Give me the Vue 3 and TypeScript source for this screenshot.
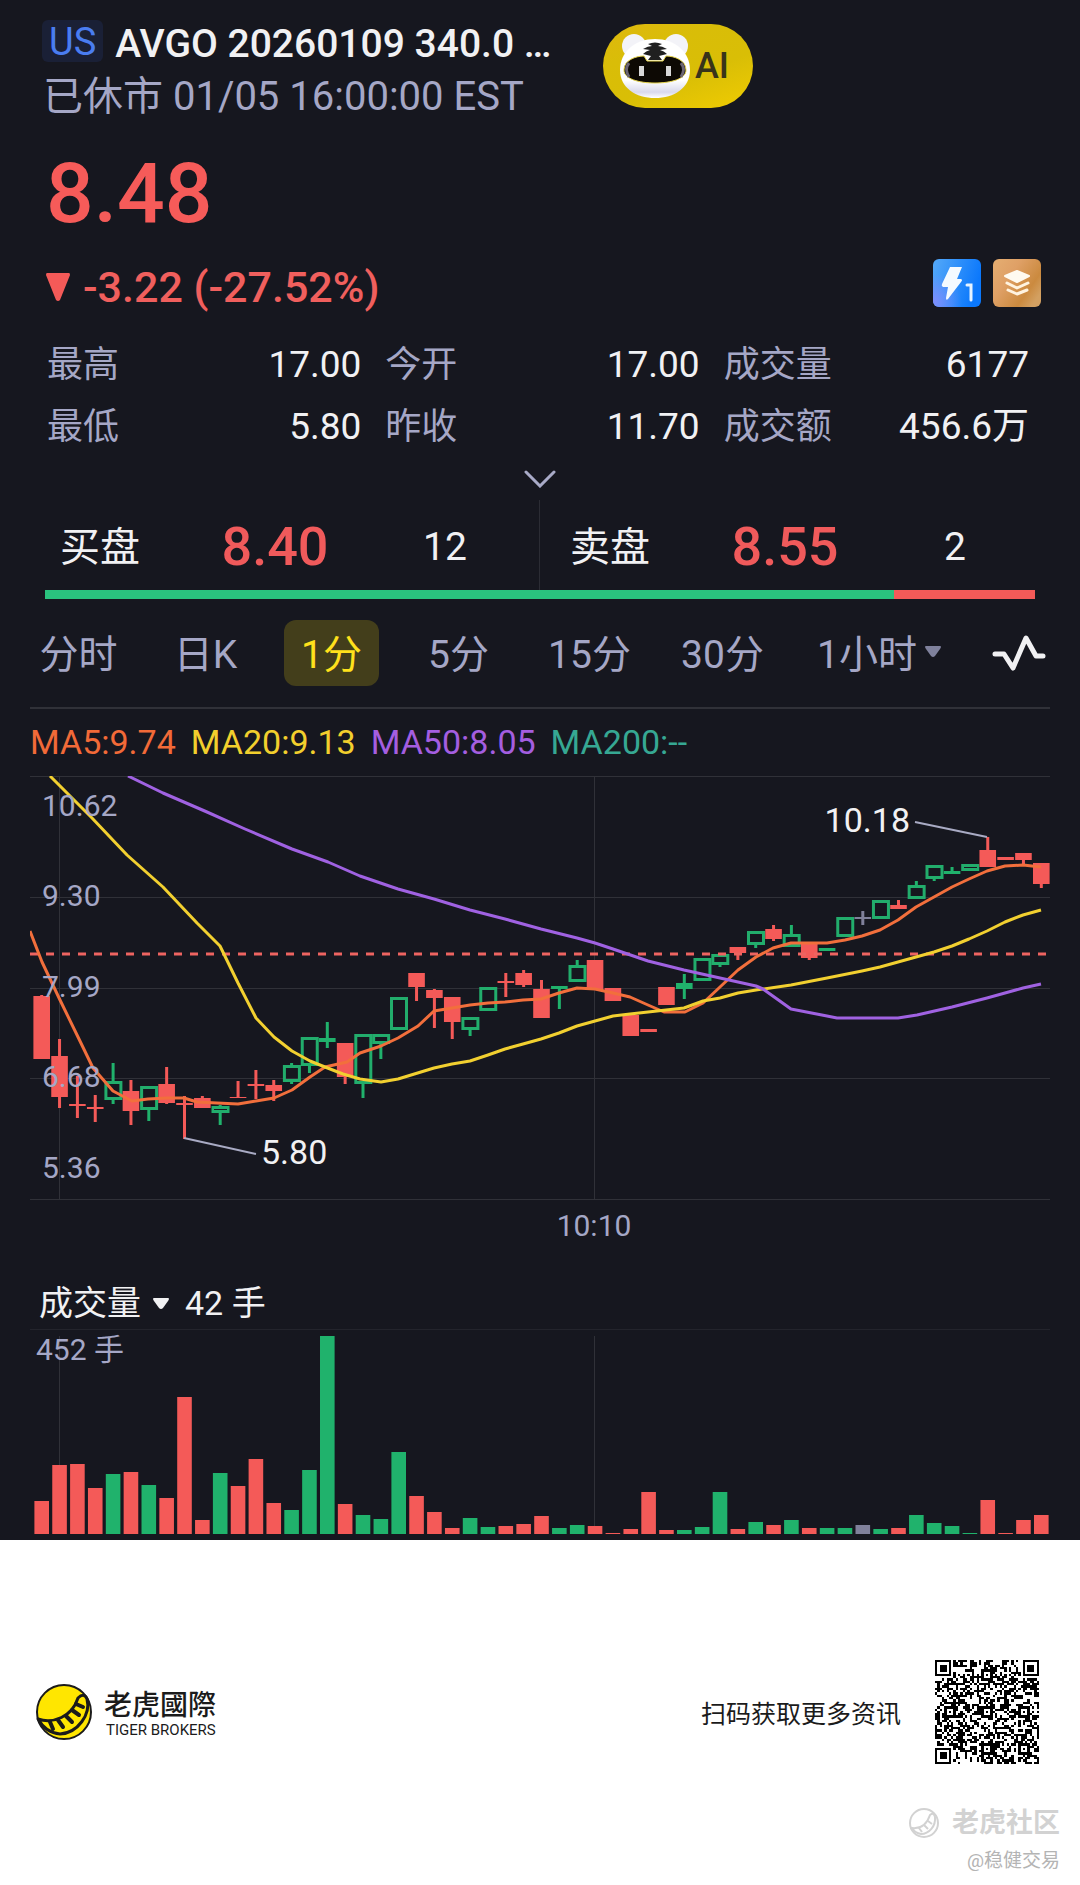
<script setup lang="ts">
type Tone = 'r' | 'g' | 'n'

interface Candle {
  x: number
  tone: Tone
  high: number
  top: number
  bottom: number
  low: number
}

interface Stat {
  label: string
  value: string
}

const stats: Stat[] = [
  { label: '最高', value: '17.00' },
  { label: '今开', value: '17.00' },
  { label: '成交量', value: '6177' },
  { label: '最低', value: '5.80' },
  { label: '昨收', value: '11.70' },
  { label: '成交额', value: '456.6万' },
]

const quotes = [
  { side: '买盘', price: '8.40', size: 12 },
  { side: '卖盘', price: '8.55', size: 2 },
]
const bidShare = (quotes[0].size / (quotes[0].size + quotes[1].size)) * 100

const periods = ['分时', '日K', '1分', '5分', '15分', '30分', '1小时']
const activePeriod = '1分'

const averages = [
  { text: 'MA5:9.74', cls: 'ma5' },
  { text: 'MA20:9.13', cls: 'ma20' },
  { text: 'MA50:8.05', cls: 'ma50' },
  { text: 'MA200:--', cls: 'ma200' },
]

const STEP = 17.85
const FIRST = 41.7
const tones = 'rrrrgrgrrrgrrrgggrgggrrrggrrrggrrrrrgggrgrgrggngrggggrrrr'.split('') as Tone[]

// high, body top, body bottom, low for every minute
const ohlc: number[][] = [
  [225, 226, 289, 289], [269, 286, 327, 338], [306, 334, 336, 348], [325, 337, 339, 352],
  [293, 311, 330, 334], [310, 321, 341, 355], [316, 316, 340, 351], [297, 314, 333, 334],
  [326, 333, 335, 369], [326, 328, 338, 338], [335, 336, 343, 355], [311, 327, 328, 328],
  [300, 314, 316, 329], [310, 315, 321, 331], [293, 295, 312, 314], [267, 267, 296, 303],
  [252, 268, 272, 278], [273, 273, 307, 314], [264, 264, 314, 328], [264, 264, 274, 289],
  [227, 227, 260, 260], [203, 203, 217, 231], [219, 220, 228, 258], [227, 227, 252, 269],
  [247, 247, 260, 266], [217, 217, 241, 241], [203, 211, 213, 227], [200, 203, 215, 217],
  [210, 219, 248, 248], [216, 216, 219, 239], [190, 195, 212, 212], [190, 190, 220, 220],
  [218, 218, 231, 231], [245, 245, 266, 266], [259, 259, 262, 262], [217, 217, 235, 235],
  [204, 213, 219, 229], [188, 188, 211, 211], [184, 184, 195, 197], [177, 177, 183, 190],
  [161, 161, 175, 178], [155, 159, 169, 171], [155, 164, 177, 177], [173, 173, 188, 190],
  [178, 178, 181, 181], [147, 147, 167, 167], [141, 147, 149, 155], [130, 130, 149, 149],
  [130, 135, 139, 139], [111, 115, 129, 129], [95, 95, 109, 111], [97, 101, 104, 104],
  [94, 94, 101, 101], [67, 80, 97, 97], [87, 87, 90, 90], [83, 83, 90, 95], [93, 93, 114, 118],
]

const candles: Candle[] = ohlc.map(([high, top, bottom, low], i) => ({
  x: FIRST + i * STEP, tone: tones[i], high, top, bottom, low,
}))

const hollow = (c: Candle) => c.tone === 'g' && c.bottom - c.top > 6

const volumes = [
  33, 69, 70, 46, 60, 62, 49, 36, 137, 14, 61, 48, 75, 31, 24, 64, 198, 30, 19, 15, 82, 38, 22, 6,
  16, 7, 8, 10, 18, 6, 9, 8, 1, 5, 42, 4, 4, 7, 42, 5, 12, 9, 14, 6, 6, 6, 9, 5, 6, 19, 11, 8, 1,
  34, 1, 14, 19,
]

const ma5 =
  '30,161 42,192 60,230 78,267 93,298 113,321 132,331 148,329 167,328 184,328 197,332 217,333 238,334 256,331 274,328 292,320 310,307 325,297 347,292 360,283 381,276 398,268 418,256 434,241 452,238 470,235 488,233 505,232 523,230 541,229 559,223 577,218 595,219 613,223 630,227 648,235 664,242 685,242 703,233 720,217 738,200 756,187 773,178 791,173 809,173 827,173 845,170 862,166 880,160 898,150 916,137 934,127 952,117 969,109 987,101 1005,96 1023,95 1041,97'
const ma20 =
  '50,6 92,48 127,85 163,117 197,153 220,176 238,213 256,248 274,267 292,281 310,291 325,297 343,304 360,309 381,312 398,309 434,298 452,294 470,291 488,285 505,279 523,274 541,269 559,263 577,256 595,251 613,246 630,244 648,242 666,240 684,238 703,231 720,228 738,223 756,220 791,215 827,208 862,201 880,197 898,192 916,187 934,182 952,176 969,169 987,161 1005,152 1023,145 1041,140'
const ma50 =
  '128,6 163,23 207,42 245,59 292,79 328,92 360,106 398,119 434,129 470,140 505,149 541,159 577,168 595,173 613,179 648,191 684,200 720,208 756,216 763,219 791,239 827,246 837,248 898,248 917,245 952,237 987,228 1023,218 1041,214'

const priceLabels = [
  { text: '10.62', y: 46 },
  { text: '9.30', y: 136 },
  { text: '7.99', y: 227 },
  { text: '6.68', y: 317 },
  { text: '5.36', y: 408 },
]
const gridRows = [6.5, 127.5, 218.5, 308.5, 429.5]
const gridCols = [59.5, 594.5]

// 45-module code: three finders, alignment marks, timing tracks and a payload field
const QR = 45
function buildCode(): string {
  const cells: boolean[][] = []
  let seed = 20260109
  for (let y = 0; y < QR; y++) {
    cells.push([])
    for (let x = 0; x < QR; x++) {
      seed = (Math.imul(seed, 1664525) + 1013904223) >>> 0
      cells[y].push(seed / 4294967296 > 0.5)
    }
  }
  for (let i = 8; i < QR - 8; i++) {
    cells[6][i] = i % 2 === 0
    cells[i][6] = i % 2 === 0
  }
  for (const [cx, cy] of [[22, 6], [6, 22], [22, 22], [38, 22], [22, 38], [38, 38]]) {
    for (let dy = -2; dy <= 2; dy++)
      for (let dx = -2; dx <= 2; dx++)
        cells[cy + dy][cx + dx] = Math.max(Math.abs(dx), Math.abs(dy)) !== 1
  }
  for (const [cx, cy] of [[3, 3], [QR - 4, 3], [3, QR - 4]]) {
    for (let dy = -4; dy <= 4; dy++)
      for (let dx = -4; dx <= 4; dx++) {
        const x = cx + dx
        const y = cy + dy
        if (x < 0 || y < 0 || x >= QR || y >= QR) continue
        const ring = Math.max(Math.abs(dx), Math.abs(dy))
        cells[y][x] = ring !== 4 && ring !== 2
      }
  }
  let d = ''
  cells.forEach((row, y) => row.forEach((on, x) => { if (on) d += `M${x} ${y}h1v1h-1z` }))
  return d
}
const code = buildCode()
</script>

<template>
  <main class="page">
    <section class="quote">
      <header class="head">
        <div class="ident">
          <h1 class="title"><span class="market">US</span><span class="name">AVGO 20260109 340.0 …</span></h1>
          <p class="status">已休市 01/05 16:00:00 EST</p>
        </div>
        <button class="ai" type="button">
          <svg class="bear" viewBox="0 0 72 68" aria-hidden="true">
            <defs>
              <linearGradient id="fur" x1="0" y1="0" x2="0" y2="1">
                <stop offset="0.7" stop-color="#fff" />
                <stop offset="0.9" stop-color="#d9d9ec" />
                <stop offset="1" stop-color="#fff" />
              </linearGradient>
            </defs>
            <circle cx="15" cy="14" r="12" fill="#f3f3f8" />
            <circle cx="57" cy="14" r="12" fill="#f3f3f8" />
            <path d="M36 7C56 7 71 20 71 38C71 56 55 66 36 66S1 56 1 38C1 20 16 7 36 7Z" fill="url(#fur)" />
            <path d="M5 38C5 28 17 24 25 24L28 29H44L47 24C55 24 67 28 67 38C67 47 52 51 36 51S5 47 5 38Z" fill="#0d0904" stroke="#e6d44a" />
            <path d="M10 31Q5 37 10 45M62 31Q67 37 62 45" fill="none" stroke="#6b6474" stroke-width="3" />
            <path d="M29 12Q36 9 43 12L39 14Q43 14 48 17L41 18Q45 19 48 22L40 24L43 28H29L32 24L24 22Q27 19 31 18L24 17Q29 14 33 14Z" fill="#202020" />
            <path d="M20 34h5v10h-5zM47 34h5v10h-5z" fill="#d8d8d8" />
          </svg>
          <span>AI</span>
        </button>
      </header>

      <p class="price">8.48</p>
      <div class="change-row">
        <p class="change">
          <svg class="down" viewBox="0 0 24 28" aria-hidden="true"><path d="M1 0H23Q24 0 24 2L14 27Q12 29 10 27L0 2Q0 0 1 0Z" fill="#f45a58" /></svg>
          <span>-3.22 (-27.52%)</span>
        </p>
        <div class="tools">
          <button type="button" aria-label="实时行情">
            <svg viewBox="0 0 48 48">
              <defs>
                <linearGradient id="blue" x1="0" y1="0" x2="1" y2="0.3">
                  <stop offset="0" stop-color="#55a9f8" />
                  <stop offset="1" stop-color="#0b78fc" />
                </linearGradient>
                <radialGradient id="violet" cx="0" cy="0.9" r="0.6">
                  <stop offset="0" stop-color="#7f8dfc" />
                  <stop offset="1" stop-color="#7f8dfc" stop-opacity="0" />
                </radialGradient>
              </defs>
              <rect width="48" height="48" rx="6" fill="url(#blue)" />
              <rect width="48" height="48" rx="6" fill="url(#violet)" />
              <path d="M17 8H29L24 20H28Q30 21 28 23L15 40Q13 42 13 39L15 28H10Q8 27 9 25Z" fill="#f4faff" />
              <path d="M34 26H38V41" fill="none" stroke="#e6f3ff" stroke-width="3" stroke-linecap="round" />
            </svg>
          </button>
          <button type="button" aria-label="深度行情">
            <svg viewBox="0 0 48 48">
              <defs>
                <linearGradient id="sand" x1="0" y1="0" x2="1" y2="0.7">
                  <stop offset="0" stop-color="#e5ae72" />
                  <stop offset="0.4" stop-color="#dfa066" />
                  <stop offset="0.8" stop-color="#cb8a3f" />
                  <stop offset="1" stop-color="#d3a061" />
                </linearGradient>
              </defs>
              <rect width="48" height="48" rx="6" fill="url(#sand)" />
              <path d="M24 12L36 17L24 23L12 17Z" fill="#fffaf0" stroke="#fffaf0" stroke-width="2" stroke-linejoin="round" />
              <path d="M14 24L24 29L35 24M15 31L24 35L34 31" fill="none" stroke="#fff3e0" stroke-width="3" stroke-linecap="round" stroke-linejoin="round" />
            </svg>
          </button>
        </div>
      </div>

      <dl class="stats">
        <div v-for="s in stats" :key="s.label" class="stat">
          <dt>{{ s.label }}</dt>
          <dd>{{ s.value }}</dd>
        </div>
      </dl>
      <button class="expand" type="button" aria-label="展开">
        <svg viewBox="0 0 32 18"><path d="M2 2L16 16L30 2" fill="none" stroke="#a9abc8" stroke-width="3" stroke-linecap="round" /></svg>
      </button>

      <div class="book">
        <div v-for="q in quotes" :key="q.side" class="side">
          <span class="side-name">{{ q.side }}</span>
          <span class="side-price">{{ q.price }}</span>
          <span class="side-size">{{ q.size }}</span>
        </div>
      </div>
      <div class="ratio"><div class="ratio-bid" :style="{ width: bidShare + '%' }"></div></div>

      <nav class="periods">
        <button v-for="p in periods" :key="p" type="button" class="period" :class="{ active: p === activePeriod }">
          {{ p }}<svg v-if="p === '1小时'" class="caret" viewBox="0 0 16 12" aria-hidden="true"><path d="M1 0H15Q17 0 15 3L10 10Q8 12 6 10L1 3Q-1 0 1 0Z" fill="#7f819c" /></svg>
        </button>
        <button type="button" class="pulse" aria-label="指标">
          <svg viewBox="0 0 54 38"><path d="M3 20H12L21 34L34 4L44 22H51" fill="none" stroke="#f1f1f3" stroke-width="5" stroke-linecap="round" stroke-linejoin="round" /></svg>
        </button>
      </nav>

      <div class="charts">
        <div class="legend">
          <span v-for="a in averages" :key="a.cls" :class="a.cls">{{ a.text }}</span>
        </div>
        <svg class="chart" viewBox="30 6 1020 502" role="img" aria-label="1分K线">
          <g class="grid">
            <line v-for="y in gridRows" :key="'r' + y" x1="30" x2="1050" :y1="y" :y2="y" />
            <line v-for="x in gridCols" :key="'c' + x" :x1="x" :x2="x" y1="6" y2="430" />
          </g>
          <g v-for="(c, i) in candles" :key="i" :class="'tone-' + c.tone">
            <rect v-if="c.top > c.high" class="solid" :x="c.x - 1.5" :y="c.high" width="3" :height="c.top - c.high" />
            <rect v-if="c.low > c.bottom" class="solid" :x="c.x - 1.5" :y="c.bottom" width="3" :height="c.low - c.bottom" />
            <rect v-if="hollow(c)" class="hollow" :x="c.x - 7.2" :y="c.top + 1.5" width="15" :height="c.bottom - c.top - 3" />
            <rect v-else class="solid" :x="c.x - 8.3" :y="c.top" width="16.6" :height="c.bottom - c.top" />
          </g>
          <line class="last" x1="30" x2="1050" y1="184" y2="184" />
          <polyline class="line l5" :points="ma5" />
          <polyline class="line l20" :points="ma20" />
          <polyline class="line l50" :points="ma50" />
          <path class="leader" d="M915 52L987 67M184 368L256 384" />
          <text v-for="l in priceLabels" :key="l.text" class="tick" x="42" :y="l.y">{{ l.text }}</text>
          <text class="mark" x="910" y="62" text-anchor="end">10.18</text>
          <text class="mark" x="261" y="394">5.80</text>
          <text class="tick" x="594" y="466" text-anchor="middle">10:10</text>
        </svg>

        <div class="vol-head">
          <button type="button" class="vol-name">
            成交量<svg class="caret" viewBox="0 0 16 12" aria-hidden="true"><path d="M1 0H15Q17 0 15 3L10 10Q8 12 6 10L1 3Q-1 0 1 0Z" fill="#f1f1f3" /></svg>
          </button>
          <span>42 手</span>
        </div>
        <svg class="volume" viewBox="30 0 1020 211" role="img" aria-label="成交量">
          <line class="vol-top" x1="30" x2="1050" y1="0.5" y2="0.5" />
          <g class="grid">
            <line v-for="x in gridCols" :key="x" :x1="x" :x2="x" y1="7" y2="205" />
          </g>
          <g v-for="(v, i) in volumes" :key="i" :class="'tone-' + tones[i]">
            <rect class="bar" :x="FIRST + i * STEP - 7.3" :y="205 - v" width="14.6" :height="v" />
          </g>
          <text class="tick" x="36" y="31">452 手</text>
        </svg>
      </div>
    </section>

    <footer class="foot">
      <div class="brand-row">
        <div class="brand">
          <svg class="logo" viewBox="0 0 58 58" aria-hidden="true">
            <circle cx="29" cy="29" r="27" fill="#ffe600" stroke="#1b1b1b" stroke-width="2" />
            <path d="M3 36C18 41 37 34 43 15Q49 9 52 16C56 31 43 50 25 51Q11 50 3 36Z" fill="#ffe600" stroke="#1b1b1b" stroke-width="3" stroke-linejoin="round" />
            <path d="M15 39L18 46M23 37L28 44M31 33L37 39M37 27L44 32M41 21L48 24" stroke="#1b1b1b" stroke-width="4" stroke-linecap="round" />
          </svg>
          <div class="brand-text">
            <strong>老虎國際</strong>
            <span>TIGER BROKERS</span>
          </div>
        </div>
        <div class="scan">
          <span>扫码获取更多资讯</span>
          <svg class="qr" :viewBox="`0 0 ${QR} ${QR}`" shape-rendering="crispEdges" role="img" aria-label="二维码"><path :d="code" fill="#000" /></svg>
        </div>
      </div>
      <div class="stamp">
        <div class="community">
          <svg viewBox="0 0 32 32" aria-hidden="true">
            <circle cx="16" cy="16" r="14" fill="none" stroke="#d2d2d2" stroke-width="2" />
            <path d="M4 21C13 22 19 17 22 8Q26 5 27 10C28 19 21 27 13 27Q7 26 4 21ZM11 21L14 25M16 18L20 22M20 14L24 17" fill="none" stroke="#d2d2d2" stroke-width="2" />
          </svg>
          <strong>老虎社区</strong>
        </div>
        <span class="author">@稳健交易</span>
      </div>
    </footer>
  </main>
</template>

<style>
body {
  margin: 0;
  background: #fff;
}
</style>

<style scoped>
.page {
  font-family: Roboto, "Noto Sans CJK SC", sans-serif;
  color: #f1f1f3;
}
p, h1, dl, dd {
  margin: 0;
}
button {
  margin: 0;
  padding: 0;
  border: 0;
  background: none;
  color: inherit;
  font: inherit;
}
svg {
  display: block;
}
.quote {
  background: #16171f;
  padding-top: 20px;
}
.head {
  display: flex;
  align-items: flex-start;
  padding: 0 42px;
}
.ident {
  width: 561px;
}
.title {
  display: flex;
  gap: 12px;
  font-size: 39px;
  font-weight: 500;
  line-height: 48px;
  white-space: nowrap;
}
.market {
  height: 42px;
  padding: 0 7px;
  border-radius: 6px;
  background: #1a2036;
  color: #4a7df0;
  font-size: 38px;
  font-weight: 400;
  line-height: 44px;
}
.status {
  margin-top: 6px;
  padding-left: 1px;
  color: #a5a7c6;
  font-size: 40px;
  line-height: 46px;
  white-space: nowrap;
}
.ai {
  display: flex;
  align-items: center;
  gap: 4px;
  width: 150px;
  height: 84px;
  margin-top: 4px;
  padding-left: 16px;
  border-radius: 42px;
  background: linear-gradient(160deg, #dfb80e 0%, #d9bd08 30%, #d9be06 60%, #f0cc02 100%);
  color: #38341a;
  font-size: 36px;
  font-weight: 500;
  line-height: 42px;
}
.bear {
  width: 72px;
  height: 68px;
}
.price {
  margin-top: 24px;
  padding-left: 46px;
  color: #f65b59;
  font-size: 84px;
  font-weight: 500;
  line-height: 100px;
}
.change-row {
  display: flex;
  align-items: flex-start;
  justify-content: space-between;
  margin-top: 15px;
  padding: 0 39px 0 46px;
}
.change {
  display: flex;
  align-items: center;
  gap: 13px;
  color: #f05f5d;
  font-size: 43px;
  font-weight: 500;
  line-height: 56px;
}
.down {
  width: 24px;
  height: 28px;
}
.tools {
  display: flex;
  gap: 12px;
}
.tools svg {
  width: 48px;
  height: 48px;
}
.stats {
  display: grid;
  grid-template-columns: repeat(3, 1fr);
  column-gap: 24px;
  margin-top: 19px;
  padding: 0 42px 0 47px;
}
.stat {
  display: flex;
  justify-content: space-between;
  font-size: 37px;
  line-height: 62px;
}
.stat:nth-child(3n) {
  padding-right: 9px;
}
.stat dt {
  color: #a5a7c6;
  font-size: 36px;
}
.expand {
  display: flex;
  align-items: center;
  justify-content: center;
  width: 100%;
  height: 42px;
}
.expand svg {
  width: 32px;
  height: 18px;
}
.book {
  display: grid;
  grid-template-columns: 1fr 1fr;
  padding: 0 30px;
}
.side {
  display: grid;
  grid-template-columns: 16fr 17fr 17fr;
  align-items: center;
  height: 90px;
  padding-right: 10px;
  font-size: 39px;
  text-align: center;
}
.side + .side {
  box-shadow: -1px 0 #2b2c34;
}
.side-name {
  padding: 0 0 2px 30px;
  font-size: 40px;
  text-align: left;
}
.side-price {
  padding-top: 2px;
  color: #f05a5b;
  font-size: 54px;
  font-weight: 500;
}
.side-size {
  padding-top: 4px;
}
.ratio {
  height: 9px;
  margin: 0 45px;
  background: #f45a58;
}
.ratio-bid {
  height: 100%;
  background: #2ac27e;
}
.periods {
  display: grid;
  grid-template-columns: 127fr 127fr 125fr 129fr 133fr 133fr 180fr 100fr;
  justify-items: center;
  align-items: center;
  margin-top: 21px;
  padding: 0 11px 0 15px;
}
.period {
  display: flex;
  align-items: center;
  gap: 8px;
  height: 66px;
  padding: 4px 17px 0;
  box-sizing: border-box;
  border-radius: 12px;
  color: #a5a7c6;
  font-size: 39px;
  line-height: 60px;
  white-space: nowrap;
}
.period.active {
  background: #433e1b;
  color: #ffe11c;
}
.caret {
  width: 16px;
  height: 12px;
}
.period .caret {
  margin-bottom: 6px;
}
.pulse svg {
  width: 54px;
  height: 38px;
}
.charts {
  margin-top: 21px;
  padding: 0 30px;
}
.legend {
  display: flex;
  gap: 15px;
  border-top: 2px solid #303138;
  font-size: 34px;
  line-height: 67px;
  white-space: nowrap;
}
.ma5 { color: #f26a38; }
.ma20 { color: #f2cf2d; }
.ma50 { color: #a45ee0; }
.ma200 { color: #36a893; }
.chart,
.volume {
  width: 100%;
  height: auto;
}
.grid line {
  stroke: #303138;
}
.vol-top {
  stroke: #23242c;
}
.tone-r .solid,
.tone-r .bar {
  fill: #f45a58;
}
.tone-g .solid,
.tone-g .bar {
  fill: #20b26c;
}
.tone-n .solid,
.tone-n .bar {
  fill: #80819b;
}
.hollow {
  fill: none;
  stroke: #22ad6c;
  stroke-width: 3;
}
.last {
  stroke: #ee6461;
  stroke-width: 3;
  stroke-dasharray: 8 8;
}
.line {
  fill: none;
  stroke-width: 3;
  stroke-linejoin: round;
}
.l5 { stroke: #f26f3c; }
.l20 { stroke: #f2d030; }
.l50 { stroke: #a062e2; }
.leader {
  fill: none;
  stroke: #a9abc4;
  stroke-width: 2;
}
.tick {
  fill: #a5a7c6;
  font-size: 30px;
}
.mark {
  fill: #f1f1f3;
  font-size: 34px;
}
.vol-head {
  display: flex;
  gap: 16px;
  padding-left: 9px;
  font-size: 34px;
  line-height: 51px;
}
.vol-name {
  display: flex;
  align-items: center;
  gap: 12px;
}
.foot {
  padding: 120px 20px 12px 35px;
  background: #fff;
  color: #1b1b1b;
}
.brand-row {
  display: flex;
  align-items: center;
  justify-content: space-between;
  padding-right: 21px;
}
.brand {
  display: flex;
  align-items: center;
  gap: 11px;
}
.logo {
  width: 58px;
  height: 58px;
}
.brand-text {
  display: flex;
  flex-direction: column;
  padding-top: 4px;
}
.brand-text strong {
  font-size: 28px;
  font-weight: 500;
  line-height: 32px;
}
.brand-text span {
  padding-left: 2px;
  font-size: 15px;
  line-height: 16px;
}
.scan {
  display: flex;
  align-items: center;
  gap: 34px;
  font-size: 25px;
}
.qr {
  width: 104px;
  height: 104px;
}
.stamp {
  display: flex;
  flex-direction: column;
  align-items: flex-end;
  gap: 8px;
  margin-top: 41px;
}
.community {
  display: flex;
  align-items: center;
  gap: 12px;
  color: #d2d2d2;
  font-size: 27px;
  line-height: 36px;
}
.community svg {
  width: 32px;
  height: 32px;
}
.author {
  color: #b4b4b4;
  font-size: 19px;
  line-height: 24px;
}
</style>
